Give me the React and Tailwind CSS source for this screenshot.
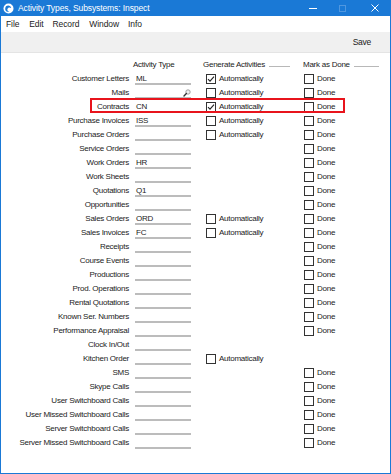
import React from 'react';

const rows = [
  { label: 'Customer Letters', value: 'ML', gen: 'on', done: true },
  { label: 'Mails', value: '', gen: 'off', done: true, search: true },
  { label: 'Contracts', value: 'CN', gen: 'on', done: true },
  { label: 'Purchase Invoices', value: 'ISS', gen: 'off', done: true },
  { label: 'Purchase Orders', value: '', gen: 'off', done: true },
  { label: 'Service Orders', value: '', done: true },
  { label: 'Work Orders', value: 'HR', done: true },
  { label: 'Work Sheets', value: '', done: true },
  { label: 'Quotations', value: 'Q1', done: true },
  { label: 'Opportunities', value: '', done: true },
  { label: 'Sales Orders', value: 'ORD', gen: 'off', done: true },
  { label: 'Sales Invoices', value: 'FC', gen: 'off', done: true },
  { label: 'Receipts', value: '', done: true },
  { label: 'Course Events', value: '', done: true },
  { label: 'Productions', value: '', done: true },
  { label: 'Prod. Operations', value: '', done: true },
  { label: 'Rental Quotations', value: '', done: true },
  { label: 'Known Ser. Numbers', value: '', done: true },
  { label: 'Performance Appraisal', value: '', done: true },
  { label: 'Clock In/Out', value: '' },
  { label: 'Kitchen Order', value: '', gen: 'off' },
  { label: 'SMS', value: '', done: true },
  { label: 'Skype Calls', value: '', done: true },
  { label: 'User Switchboard Calls', value: '', done: true },
  { label: 'User Missed Switchboard Calls', value: '', done: true },
  { label: 'Server Switchboard Calls', value: '', done: true },
  { label: 'Server Missed Switchboard Calls', value: '', done: true },
];

const Check = ({ checked, label }) => (
  <div className="flex items-center gap-[3px]">
    <span className="flex h-[10px] w-[10px] shrink-0 items-center justify-center border border-[#333] bg-white">
      {checked && (
        <svg width="8" height="8" viewBox="0 0 8 8">
          <path d="M1 4.2 L3 6.2 L7 1.6" fill="none" stroke="#222" strokeWidth="1.1" />
        </svg>
      )}
    </span>
    <span>{label}</span>
  </div>
);

const SearchIcon = () => (
  <svg width="8" height="8" viewBox="0 0 8 8" className="absolute right-0 top-[1px]">
    <circle cx="5" cy="3" r="2.2" fill="#eee" stroke="#999" strokeWidth="0.9" />
    <path d="M3.4 4.6 L1 7" stroke="#333" strokeWidth="1.4" strokeLinecap="round" />
  </svg>
);

export default function App() {
  return (
    <div
      className="relative flex h-[474px] w-[391px] flex-col border-x border-b border-[#1a79d6] bg-white text-[8px] tracking-[-0.25px] text-[#1b1b1b]"
      style={{ fontFamily: '"Liberation Sans", Arial, sans-serif' }}
    >
      {/* title bar */}
      <div className="-mx-px flex h-[16px] items-center bg-[#1a79d6] text-white">
        <svg width="11" height="11" viewBox="0 0 11 11" className="ml-[3px]">
          <circle cx="5.5" cy="5.5" r="5" fill="#fff" />
          <path d="M3 3.2 C5 1.8 8 2.6 8.2 5 C6.6 4 5 4.4 4.4 6 C4 7.4 5.2 8.6 6.6 8.4 C4.6 9.6 2.2 8.4 2.2 6 C2.2 4.8 2.5 3.8 3 3.2 Z" fill="#1a79d6" />
        </svg>
        <span className="ml-[4px] text-[8.5px] tracking-[-0.1px]">Activity Types, Subsystems: Inspect</span>
        <div className="ml-auto flex items-center">
          <span className="mr-[22px] block h-px w-[8px] bg-white" />
          <span className="mr-[25px] block h-[7px] w-[7px] border border-[#4f97e0]" />
          <svg width="8" height="8" viewBox="0 0 8 8" className="mr-[12px]">
            <path d="M0.5 0.5 L7.5 7.5 M7.5 0.5 L0.5 7.5" stroke="#fff" strokeWidth="1" />
          </svg>
        </div>
      </div>

      {/* menu bar */}
      <div className="flex h-[16px] items-center bg-white text-[8.5px] tracking-[-0.1px]">
        <span className="ml-[5px]">File</span>
        <span className="ml-[10px]">Edit</span>
        <span className="ml-[9px]">Record</span>
        <span className="ml-[10px]">Window</span>
        <span className="ml-[9px]">Info</span>
      </div>

      {/* toolbar */}
      <div className="flex h-[21px] items-center justify-end border-b border-[#e4e4e4] bg-[#f0f0f0] pr-[19px] text-[8.5px]">
        Save
      </div>

      {/* content */}
      <div className="relative pt-[5px]">
        <div className="grid h-[14px] grid-cols-[134px_68px_100px_1fr] items-center">
          <span />
          <span className="-ml-[2px]">Activity Type</span>
          <div className="flex items-center">
            <span>Generate Activities</span>
            <span className="ml-[4px] mt-[3px] block h-px w-[21px] bg-[#b8b8b8]" />
          </div>
          <div className="flex items-center">
            <span>Mark as Done</span>
            <span className="ml-[4px] mt-[3px] block h-px w-[25px] bg-[#b8b8b8]" />
          </div>
        </div>

        {rows.map((r) => (
          <div key={r.label} className="grid h-[14px] grid-cols-[134px_68px_100px_1fr] items-center">
            <span className="pr-[6px] text-right whitespace-nowrap">{r.label}</span>
            <div className="relative h-[11px] w-[56px] border-b-2 border-[#bcbcbc] pl-px leading-[10px]">
              {r.value}
              {r.search && <SearchIcon />}
            </div>
            <div className="pl-[3px]">{r.gen && <Check checked={r.gen === 'on'} label="Automatically" />}</div>
            <div className="pl-px">{r.done && <Check checked={false} label="Done" />}</div>
          </div>
        ))}

        {/* highlight */}
        <div className="pointer-events-none absolute left-[89px] top-[45px] h-[15px] w-[255px] border-2 border-[#e8141c]" />
      </div>
    </div>
  );
}
